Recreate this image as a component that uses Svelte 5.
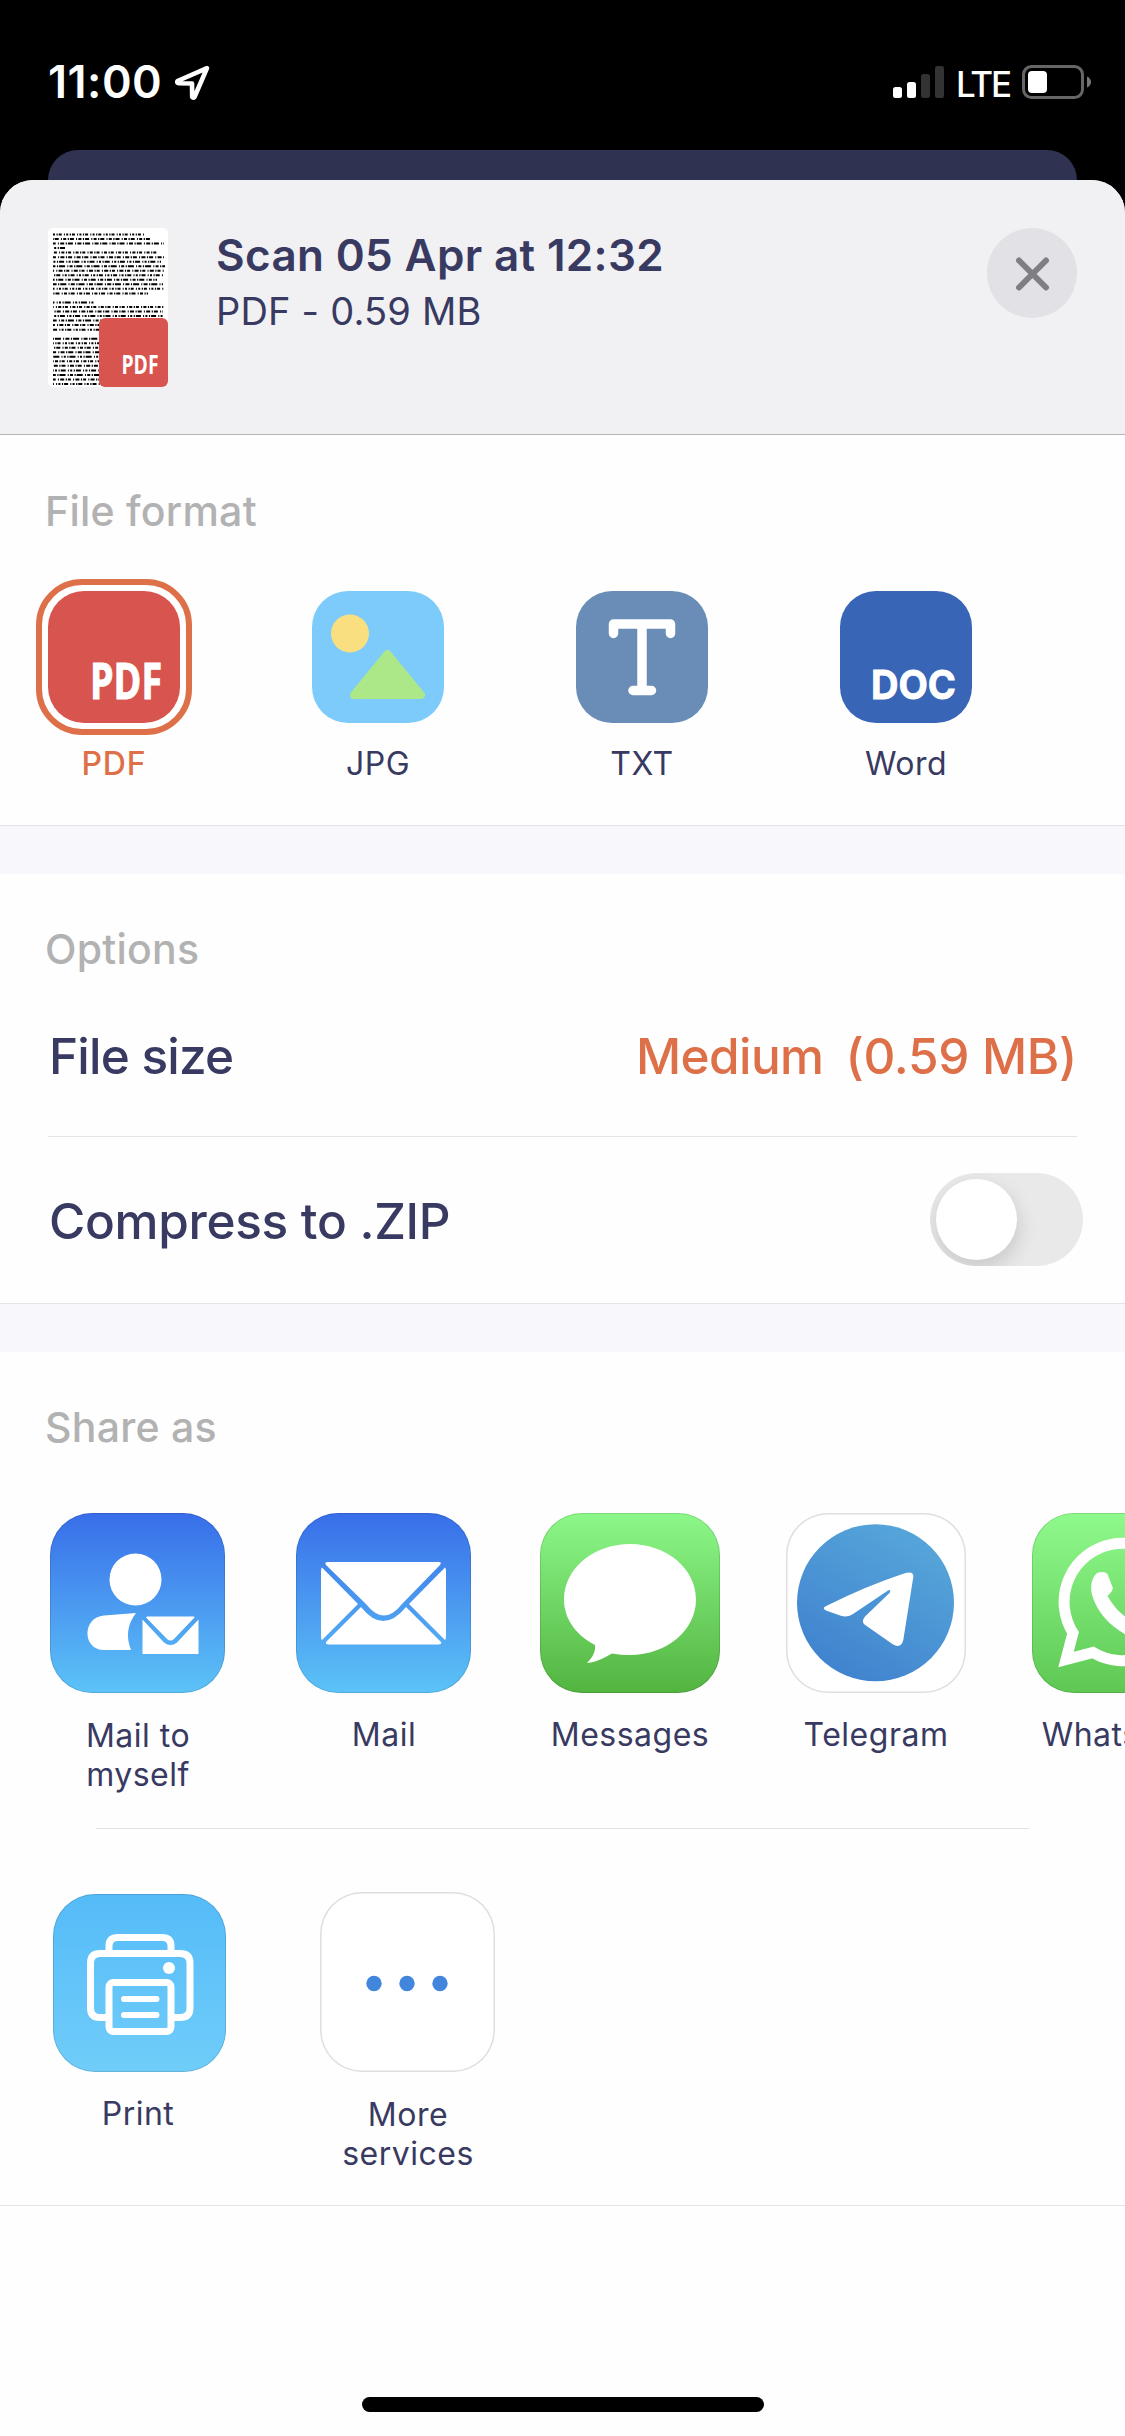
<script>
  const formats = [
    { id: 'pdf', label: 'PDF' },
    { id: 'jpg', label: 'JPG' },
    { id: 'txt', label: 'TXT' },
    { id: 'doc', label: 'Word' },
  ];
  let selected = $state('pdf');
  let zip = $state(false);

  // Rows of the tiny page preview: line lengths, 0 marks an empty row.
  const rows = [91, 97, 111, 12, 104, 111, 108, 112, 112, 110, 104, 110, 111, 95, 0, 41, 111, 110, 111, 112, 110, 62, 0, 96, 112, 96, 111, 110, 111, 110, 108, 111, 112, 111];
</script>

{#snippet envelope()}
  <svg viewBox="0 0 175 180" class="art">
    <g fill="#fff">
      <path d="M32 49h111q3 0 1 3L106 91q-18 23-36 0L30 52q-2-3 2-3z" />
      <path d="M26 54.500l36 36.500L26 127q-1-1-1-4V58q0-3 1-3.500z" />
      <path d="M149 54.500l-36 36.500 36 36q1-1 1-4V58q0-3-1-3.500z" />
      <path d="M65 94q22 28 45 0l35 35q1 2.500-3 2.500H33q-4 0-3-2.500z" />
    </g>
  </svg>
{/snippet}

<div class="screen">
  <header class="status">
    <div class="clock">
      <span>11:00</span>
      <svg width="36" height="36" viewBox="0 0 36 36" fill="none" stroke="#fff" stroke-width="4.600" stroke-linejoin="round">
        <path d="M33 3.200L3.500 16Q2.500 18 4.500 18.200L18 18.500l.2 13.500q1 1.500 2.300 0z" />
      </svg>
    </div>
    <div class="signals">
      <svg width="51" height="32" viewBox="0 0 51 32">
        <rect x="0" y="21" width="9" height="11" rx="2.500" fill="#fff" />
        <rect x="14" y="16" width="9" height="16" rx="2.500" fill="#fff" />
        <rect x="28" y="8" width="9" height="24" rx="2.500" fill="#333" />
        <rect x="42" y="0" width="9" height="32" rx="2.500" fill="#333" />
      </svg>
      <span>LTE</span>
      <svg width="70" height="34" viewBox="0 0 70 34">
        <rect x="1.500" y="1.500" width="59" height="31" rx="8" fill="none" stroke="#666" stroke-width="3" />
        <rect x="6" y="6" width="19" height="22" rx="4" fill="#fff" />
        <path d="M65 11.500q4 2 4 5.500t-4 5.500z" fill="#777" />
      </svg>
    </div>
  </header>

  <div class="behind"></div>

  <main class="sheet">
    <section class="file">
      <div class="thumb">
        <svg width="120" height="159" viewBox="0 0 120 159">
          {#each rows as w, i}
            {#if w}
              <line x1="5" x2={5 + w} y1={6.500 + i * 4.530} y2={6.500 + i * 4.530} stroke="#000" stroke-width="2" stroke-dasharray={`${2 + (i % 3)} 1.500 1.200 1 ${3 + (i % 4)} 2.200 1 1.300`} stroke-dashoffset={i * 5} />
            {/if}
          {/each}
        </svg>
        <svg class="badge" viewBox="0 0 69 69">
          <rect width="69" height="69" rx="6" fill="#d8544f" />
          <text x="22.500" y="56" class="mark" font-size="27" textLength="37" lengthAdjust="spacingAndGlyphs">PDF</text>
        </svg>
      </div>
      <div class="info">
        <h1>Scan 05 Apr at 12:32</h1>
        <p>PDF - 0.59 MB</p>
      </div>
      <button class="close" aria-label="Close">
        <svg width="90" height="90" viewBox="0 0 90 90" stroke="#7f7e83" stroke-width="6" stroke-linecap="round">
          <path d="M32 32.500l27 27M59 32.500l-27 27" />
        </svg>
      </button>
    </section>

    <section class="formats">
      <h2>File format</h2>
      <div class="format-row">
        {#each formats as f}
          <button class="format" class:on={selected === f.id} onclick={() => (selected = f.id)}>
            <span class="ring">
              <svg width="132" height="132" viewBox="0 0 132 132">
                {#if f.id === 'pdf'}
                  <rect width="132" height="132" rx="36" fill="#d8544f" />
                  <text x="42" y="108" class="mark bold" font-size="50" textLength="72" lengthAdjust="spacingAndGlyphs">PDF</text>
                {:else if f.id === 'jpg'}
                  <rect width="132" height="132" rx="36" fill="#7dcbfb" />
                  <circle cx="38" cy="42.500" r="19" fill="#fadf80" />
                  <path d="M75.500 63L109 104H42z" fill="#ace788" stroke="#ace788" stroke-width="8" stroke-linejoin="round" />
                {:else if f.id === 'txt'}
                  <rect width="132" height="132" rx="36" fill="#6a8db7" />
                  <path d="M37.500 42.500V33H94.500V42.500M66 33V99.500M57 99.500H75.500" fill="none" stroke="#fff" stroke-width="9.500" stroke-linecap="round" stroke-linejoin="round" />
                {:else}
                  <rect width="132" height="132" rx="36" fill="#3865b6" />
                  <text x="31" y="107.500" class="doc" font-size="40" textLength="85" lengthAdjust="spacingAndGlyphs">DOC</text>
                {/if}
              </svg>
            </span>
            <span class="label">{f.label}</span>
          </button>
        {/each}
      </div>
    </section>

    <div class="band"></div>

    <section class="options">
      <h2>Options</h2>
      <div class="option size">
        <span class="name n1">File size</span>
        <span class="value"><span class="v1">Medium</span><span class="v2">(0.59 MB)</span></span>
      </div>
      <div class="option zip">
        <span class="name n2">Compress to .ZIP</span>
        <button class="toggle" class:active={zip} aria-label="Compress to .ZIP" onclick={() => (zip = !zip)}>
          <span class="knob"></span>
        </button>
      </div>
    </section>

    <div class="band"></div>

    <section class="share">
      <h2>Share as</h2>
      <div class="apps">
        <div class="app">
          <div class="tile narrow blue">
            <svg viewBox="0 0 175 180" class="art" fill="#fff">
              <circle cx="85.500" cy="66.500" r="26" />
              <path d="M54 102.500L86 100q-13 17-5 37H54C32 137 32 104 54 102.500z" />
              <path d="M97 103.500h47q1 .5 0 1.500L124 126q-3.500 3-7 0L96.500 105q-1-1 .5-1.500z" />
              <path d="M92.500 106.500l21.500 23q6.500 5 13 0l21.500-23v34.500h-56z" />
            </svg>
          </div>
          <span class="label two">Mail to<br />myself</span>
        </div>
        <div class="app">
          <div class="tile narrow blue">{@render envelope()}</div>
          <span class="label">Mail</span>
        </div>
        <div class="app">
          <div class="tile green">
            <svg viewBox="0 0 180 180" class="art" fill="#fff">
              <path d="M90 31c37 0 66 25 66 55.500S127 142 90 142q-9 0-18-1.500c-6 3-15 9-25 9.500 5-5 9-11 8-18C36 122 24 106 24 86.500 24 56 53 31 90 31z" />
            </svg>
          </div>
          <span class="label">Messages</span>
        </div>
        <div class="app">
          <div class="tile plain">
            <svg viewBox="0 0 180 180" class="art">
              <defs>
                <linearGradient id="tg" x1=".75" y1=".1" x2=".25" y2=".95">
                  <stop offset="0" stop-color="#55a4d9" />
                  <stop offset="1" stop-color="#4083cf" />
                </linearGradient>
              </defs>
              <circle cx="89.500" cy="89.700" r="78.500" fill="url(#tg)" />
              <path d="M40.700 92.700Q80 73 117.300 60.700Q128 57 127.300 64L117.300 127Q115 136 106.700 131.300L78.500 111.500Q75 108.500 79 103.500L104 79.500Q105 76 102 77.500L67 101Q62 105 54 102.500L40 97.500Q35 95 40.700 92.700z" fill="#fff" />
            </svg>
          </div>
          <span class="label">Telegram</span>
        </div>
        <div class="app">
          <div class="tile wa">
            <svg viewBox="0 0 180 180" class="art">
              <path d="M34 146.500L41 120A58.700 58.700 0 1 1 61 139.500z" fill="none" stroke="#fff" stroke-width="11" />
              <path d="M65 60q7-2.500 10.500 1l5 13q1.500 3-5 9 12 21 31 28l8-8q2-2 5-.5l15 8q2 12-9 17-12 5-30-5Q68 108 60 82Q57 67 65 60z" fill="#fff" />
            </svg>
          </div>
          <span class="label">WhatsApp</span>
        </div>
      </div>
      <div class="services">
        <div class="app">
          <div class="tile print">
            <svg viewBox="0 0 173 178" class="art" fill="none" stroke="#fff" stroke-width="7">
              <path d="M56 58V52Q56 43.500 65 43.500H109Q118 43.500 118 52V58" />
              <path d="M54 123.500H47Q37.500 123.500 37.500 114V69Q37.500 59.500 47 59.500H127Q137 59.500 137 69V114Q137 123.500 127 123.500H120" />
              <rect x="56" y="88.500" width="62" height="49" rx="4.500" />
              <path d="M71 105H103.500M71 121H103.500" stroke-width="6" stroke-linecap="round" />
              <circle cx="116" cy="74" r="6" fill="#fff" stroke="none" />
            </svg>
          </div>
          <span class="label">Print</span>
        </div>
        <div class="app">
          <div class="tile plain narrow">
            <svg viewBox="0 0 175 180" class="art" fill="#4285dc">
              <circle cx="54" cy="91.500" r="7.700" />
              <circle cx="87" cy="91.500" r="7.700" />
              <circle cx="120" cy="91.500" r="7.700" />
            </svg>
          </div>
          <span class="label two">More<br />services</span>
        </div>
      </div>
    </section>

    <div class="home"></div>
  </main>
</div>

<style>
  :global(body) { background: #000; }
  .screen {
    width: 1125px;
    height: 2436px;
    overflow: hidden;
    background: #000;
    display: flex;
    flex-direction: column;
    font-family: Inter, 'Liberation Sans', sans-serif;
    color: #383a61;
  }
  .screen * { box-sizing: border-box; }
  svg { display: block; overflow: visible; }
  button { border: 0; padding: 0; background: none; font: inherit; color: inherit; }
  h1, h2, p { margin: 0; font-weight: 400; white-space: nowrap; }

  .status {
    height: 150px;
    padding: 65px 33px 0 48px;
    display: flex;
    justify-content: space-between;
    align-items: flex-start;
    color: #fff;
  }
  .clock { display: flex; gap: 12px; }
  .clock span { width: 114px; font-size: 45px; line-height: 34px; font-weight: 600; letter-spacing: 0.5px; white-space: nowrap; }
  .signals { display: flex; align-items: flex-start; }
  .signals svg:first-child { margin-top: 1px; }
  .signals span { width: 65px; margin: 2px 0 0 12px; font-size: 35px; line-height: 34px; font-weight: 500; letter-spacing: -2.2px; white-space: nowrap; }
  .signals svg:last-child { margin-left: 1px; }

  .behind { height: 60px; flex: none; margin: 0 48px -30px; border-radius: 30px 30px 0 0; background: #303251; }
  .sheet {
    flex: 1;
    display: flex;
    flex-direction: column;
    background: #fefefe;
    border-radius: 33px 33px 0 0;
    overflow: hidden;
    position: relative;
  }

  .file {
    height: 255px;
    padding: 48px 48px 0;
    display: flex;
    background: #f1f0f3;
    border-bottom: 1px solid #b4b4b7;
  }
  .thumb { position: relative; width: 120px; height: 159px; border-radius: 5px; background: #fff; }
  .badge { position: absolute; right: 0; bottom: 0; width: 69px; height: 69px; }
  .mark { font-family: 'Open Sans', Roboto, sans-serif; font-weight: 700; fill: #fff; }
  .bold { stroke: #fff; stroke-width: 1px; }
  .doc { font-family: Inter, sans-serif; font-weight: 700; fill: #fff; stroke: #fff; stroke-width: 0.8px; }
  .info { flex: 1; padding: 0 0 0 48px; }
  h1 { font-size: 44px; line-height: 54px; font-weight: 600; letter-spacing: 0.35px; }
  .info p { font-size: 38px; line-height: 46px; margin-top: 6px; letter-spacing: 0.2px; }
  .close { width: 90px; height: 90px; border-radius: 50%; background: #e2e1e6; }

  h2 { font-size: 41px; line-height: 50px; font-weight: 500; color: #b2b2b2; margin-left: 45px; letter-spacing: 0.25px; }
  .formats { height: 391px; padding-top: 51px; border-bottom: 1px solid #e4e4e8; }
  .format-row { display: flex; gap: 108px; margin: 43px 0 0 36px; }
  .format { width: 156px; display: flex; flex-direction: column; align-items: center; }
  .ring { padding: 6px; border: 6px solid transparent; border-radius: 46px; }
  .on .ring { border-color: #de7049; }
  .label { font-size: 32px; line-height: 39px; letter-spacing: 0.5px; text-align: center; white-space: nowrap; }
  .format .label { margin-top: 9px; }
  .on .label { color: #de7049; font-weight: 500; letter-spacing: 0.9px; }

  .band { height: 48px; background: #f7f7fc; }

  .options { height: 430px; padding-top: 50px; border-bottom: 1px solid #e4e4e8; }
  .option { display: flex; justify-content: space-between; margin: 0 48px; }
  .size { height: 163px; padding-top: 52px; border-bottom: 1px solid #e4e4e8; }
  .zip { padding-top: 36px; }
  .name, .value { font-size: 49.500px; line-height: 60px; font-weight: 500; white-space: nowrap; }
  .name { margin-left: 1px; }
  .n1 { letter-spacing: -0.8px; }
  .n2 { letter-spacing: -0.3px; }
  .value { color: #de7049; display: flex; gap: 22px; }
  .v1 { letter-spacing: -0.6px; }
  .v2 { letter-spacing: -0.3px; }
  .zip .name { margin-top: 18px; }
  .toggle { width: 153px; height: 93px; margin-right: -6px; padding: 6px; border-radius: 47px; background: #e9e9ea; overflow: hidden; }
  .toggle.active { background: #de7049; }
  .knob { display: block; width: 81px; height: 81px; border-radius: 50%; background: #fff; box-shadow: 1px 8px 20px rgba(0, 0, 0, 0.15); }
  .active .knob { margin-left: 60px; }

  .share { height: 854px; padding-top: 50px; border-bottom: 1px solid #e4e4e8; }
  .apps { height: 315px; margin: 61px 0 0 48px; display: flex; gap: 66px; width: 1077px; overflow: hidden; }
  .app { width: 180px; flex: none; display: flex; flex-direction: column; align-items: center; }
  .app .label { margin-top: 21.500px; }
  .app .two { margin-top: 22.500px; }
  .tile { width: 180px; height: 180px; border-radius: 42px; overflow: hidden; flex: none; box-shadow: inset 0 0 0 1px rgba(0, 0, 0, 0.12); }
  .narrow { width: 175px; margin-right: 2px; }
  .art { width: 100%; height: 100%; }
  .blue { background: linear-gradient(#386ee9, #5cc3f7); }
  .green { background: linear-gradient(#8cf889, #53b440); }
  .wa { background: linear-gradient(#8ffa8c, #5fc854); }
  .plain { background: #fff; box-shadow: inset 0 0 0 1.500px #dedede; }
  .services { margin: 0 96px; border-top: 1px solid #e4e4e8; padding-top: 63px; display: flex; gap: 90px; }
  .services .app:first-child { margin-left: -48px; }
  .print { width: 173px; height: 178px; margin: 2px 0 0 3px; background: linear-gradient(#55bbf8, #70cdf9); }

  .home { width: 402px; height: 15px; border-radius: 8px; background: #000; margin: auto auto 24px; }
</style>
